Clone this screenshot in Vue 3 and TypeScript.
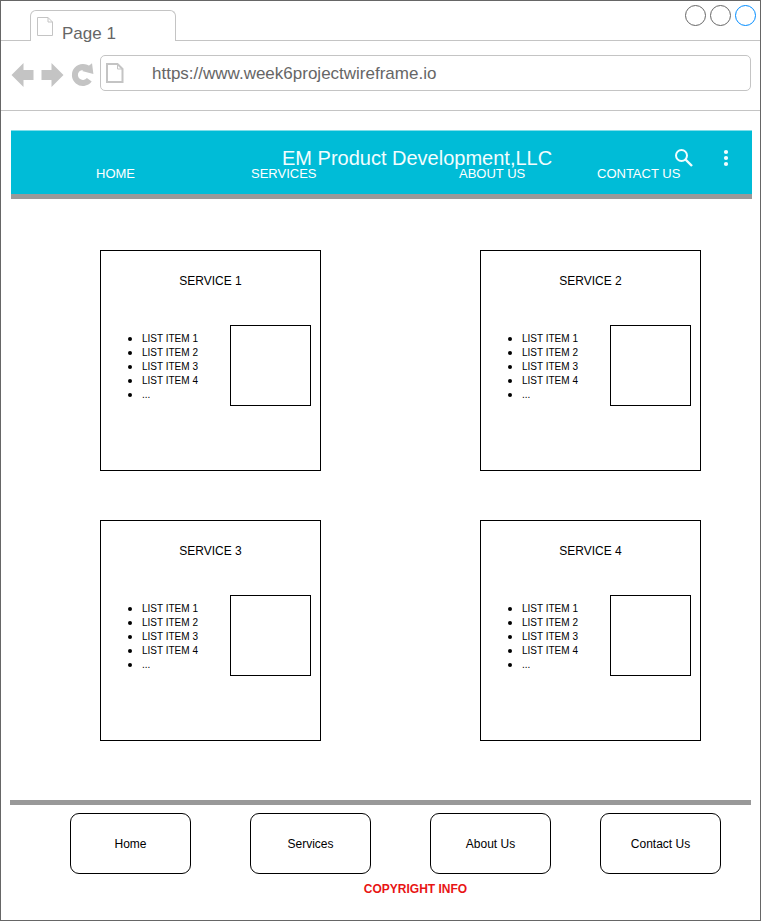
<script setup lang="ts">
import { ref } from 'vue'

interface NavLink {
  label: string
  href: string
}

const address = ref<string>('https://www.week6projectwireframe.io')

const headerLinks: NavLink[] = [
  { label: 'HOME', href: '#home' },
  { label: 'SERVICES', href: '#services' },
  { label: 'ABOUT US', href: '#about' },
  { label: 'CONTACT US', href: '#contact' },
]

const footerLinks: NavLink[] = [
  { label: 'Home', href: '#home' },
  { label: 'Services', href: '#services' },
  { label: 'About Us', href: '#about' },
  { label: 'Contact Us', href: '#contact' },
]

const services: string[] = ['SERVICE 1', 'SERVICE 2', 'SERVICE 3', 'SERVICE 4']
const items: string[] = ['LIST ITEM 1', 'LIST ITEM 2', 'LIST ITEM 3', 'LIST ITEM 4', '...']
</script>

<template>
  <div class="window">
    <div class="tab-bar">
      <button class="tab" type="button">
        <svg width="18" height="21" viewBox="0 0 18 21" aria-hidden="true">
          <path d="M1.5 1.5H12L16.5 6V19.5H1.5ZM12 1.5V6H16.5" fill="none" stroke="#c4c4c4" />
        </svg>
        <span>Page 1</span>
      </button>
      <div class="window-controls">
        <button class="dot" type="button" aria-label="Minimize"></button>
        <button class="dot" type="button" aria-label="Maximize"></button>
        <button class="dot active" type="button" aria-label="Close"></button>
      </div>
    </div>

    <div class="toolbar">
      <div class="tools">
        <button class="tool" type="button" aria-label="Back">
          <svg width="24" height="24" viewBox="0 0 24 24">
            <path d="M0.5 12L12.5 0V7H22.5V17H12.5V24Z" fill="#c4c4c4" />
          </svg>
        </button>
        <button class="tool" type="button" aria-label="Forward">
          <svg width="24" height="24" viewBox="0 0 24 24">
            <path d="M22.5 12L10.5 0V7H0.5V17H10.5V24Z" fill="#c4c4c4" />
          </svg>
        </button>
        <button class="tool" type="button" aria-label="Reload">
          <svg width="24" height="24" viewBox="0 0 24 24">
            <path d="M17.6 6.4A8 8 0 1 0 18.3 16.8" fill="none" stroke="#c4c4c4" stroke-width="6" />
            <path d="M21 0.3L22.4 11L11 8Z" fill="#c4c4c4" />
          </svg>
        </button>
      </div>
      <div class="address">
        <svg width="20" height="22" viewBox="0 0 20 22" aria-hidden="true">
          <path d="M2 2H12.5L17.5 7V20H2Z" fill="none" stroke="#c4c4c4" stroke-width="2" />
          <path d="M12.5 2V7H17.5" fill="none" stroke="#c4c4c4" />
        </svg>
        <input v-model="address" type="text" aria-label="Address" spellcheck="false" />
      </div>
    </div>

    <header class="site-header">
      <div class="brand-row">
        <h1>EM Product Development,LLC</h1>
        <button class="icon-button" type="button" aria-label="Search">
          <svg width="20" height="20" viewBox="0 0 20 20">
            <circle cx="7.5" cy="7.5" r="5.5" fill="none" stroke="#f2fdfe" stroke-width="2" />
            <path d="M11.5 11.5L18 18" stroke="#f2fdfe" stroke-width="2.4" />
          </svg>
        </button>
        <button class="icon-button" type="button" aria-label="More">
          <svg width="6" height="20" viewBox="0 0 6 20" fill="#f2fdfe">
            <circle cx="3" cy="4" r="2.1" />
            <circle cx="3" cy="10" r="2.1" />
            <circle cx="3" cy="16" r="2.1" />
          </svg>
        </button>
      </div>
      <nav class="site-nav">
        <a v-for="link in headerLinks" :key="link.label" :href="link.href">{{ link.label }}</a>
      </nav>
    </header>

    <main class="services">
      <section v-for="service in services" :key="service" class="card">
        <h2>{{ service }}</h2>
        <div class="card-body">
          <ul>
            <li v-for="item in items" :key="item">{{ item }}</li>
          </ul>
          <div class="picture"></div>
        </div>
      </section>
    </main>

    <footer class="site-footer">
      <nav class="footer-nav">
        <a v-for="link in footerLinks" :key="link.label" :href="link.href">{{ link.label }}</a>
      </nav>
      <p>COPYRIGHT INFO</p>
    </footer>
  </div>
</template>

<style>
body {
  margin: 0;
  background: #fff;
}
</style>

<style scoped>
.window,
.window * {
  box-sizing: border-box;
}

.window {
  display: flex;
  flex-direction: column;
  min-height: 100vh;
  border: 1px solid #666;
  background: #fff;
  color: #000;
  font-family: "Liberation Sans", Arial, Helvetica, sans-serif;
}

button {
  margin: 0;
  padding: 0;
  border: 0;
  background: none;
  font: inherit;
}

svg {
  display: block;
}

.tab-bar {
  display: flex;
  justify-content: space-between;
  height: 40px;
  padding: 0 4px 0 29px;
  border-bottom: 1px solid #c4c4c4;
}

.tab {
  display: flex;
  align-items: flex-start;
  gap: 8px;
  width: 146px;
  height: 31px;
  margin-top: 9px;
  padding: 5px;
  border: 1px solid #c4c4c4;
  border-bottom: 0;
  border-radius: 6px 6px 0 0;
  background: #fff;
  color: #666;
  font-size: 17px;
}

.tab span {
  line-height: 36px;
}

.window-controls {
  display: flex;
  gap: 4px;
  padding-top: 4px;
}

.dot {
  width: 21px;
  height: 21px;
  border: 1px solid #666;
  border-radius: 50%;
}

.dot.active {
  border-color: #008cff;
}

.toolbar {
  display: flex;
  align-items: center;
  gap: 5px;
  padding: 14px 9px 19px 10px;
  border-bottom: 1px solid #c4c4c4;
}

.tools {
  display: flex;
  gap: 6px;
  padding-top: 3px;
}

.address {
  display: flex;
  flex: 1;
  align-items: center;
  gap: 27px;
  height: 36px;
  padding: 0 4px;
  border: 1px solid #c4c4c4;
  border-radius: 5px;
}

.address input {
  flex: 1;
  min-width: 0;
  padding: 2px 0 0;
  border: 0;
  outline: 0;
  background: none;
  color: #666;
  font: 17px/20px "Liberation Sans", Arial, Helvetica, sans-serif;
}

.site-header {
  margin: 19px 8px 0 10px;
  padding: 17px 0 14px;
  border-top: 1px solid #7fdeea;
  border-bottom: 5px solid #999;
  background: #00bcd7;
}

.brand-row {
  display: grid;
  grid-template-columns: 392fr 49fr 29fr;
  align-items: center;
  height: 19px;
  padding-left: 271px;
}

.brand-row h1 {
  margin: 0;
  color: #f2fdfe;
  font-size: 20px;
  font-weight: 400;
  line-height: 20px;
  white-space: nowrap;
}

.icon-button {
  justify-self: start;
}

.site-nav {
  display: grid;
  grid-template-columns: 155fr 208fr 138fr 155fr;
  padding-left: 85px;
}

.site-nav a {
  justify-self: start;
  color: #fff;
  font-size: 13px;
  line-height: 13px;
  text-decoration: none;
}

.services {
  display: grid;
  grid-template-columns: repeat(2, 221px);
  justify-content: space-between;
  row-gap: 49px;
  padding: 51px 59px 59px 99px;
}

.card {
  min-height: 221px;
  padding: 22px 9px;
  border: 1px solid #000;
}

.card h2 {
  margin: 0;
  font-size: 12px;
  font-weight: 400;
  line-height: 16px;
  text-align: center;
}

.card-body {
  display: flex;
  justify-content: space-between;
  margin-top: 36px;
}

.card ul {
  margin: 0;
  padding: 7px 0 0 18px;
  font-size: 10px;
  line-height: 14px;
  list-style: none;
}

.card li {
  display: flex;
  align-items: center;
  gap: 10px;
}

.card li::before {
  width: 4px;
  height: 4px;
  border-radius: 50%;
  background: #000;
  content: "";
}

.picture {
  width: 81px;
  height: 81px;
  border: 1px solid #000;
}

.site-footer {
  margin: 0 9px;
  border-top: 5px solid #999;
}

.footer-nav {
  display: grid;
  grid-template-columns: 180fr 180fr 170fr 151fr;
  padding: 8px 0 0 60px;
}

.footer-nav a {
  display: flex;
  align-items: center;
  justify-content: center;
  width: 121px;
  height: 61px;
  border: 1px solid #000;
  border-radius: 9px;
  color: #000;
  font-size: 12px;
  text-decoration: none;
}

.site-footer p {
  margin: 7px 0 0;
  padding-left: 70px;
  color: #e81414;
  font-size: 12px;
  font-weight: 700;
  line-height: 16px;
  text-align: center;
}
</style>
